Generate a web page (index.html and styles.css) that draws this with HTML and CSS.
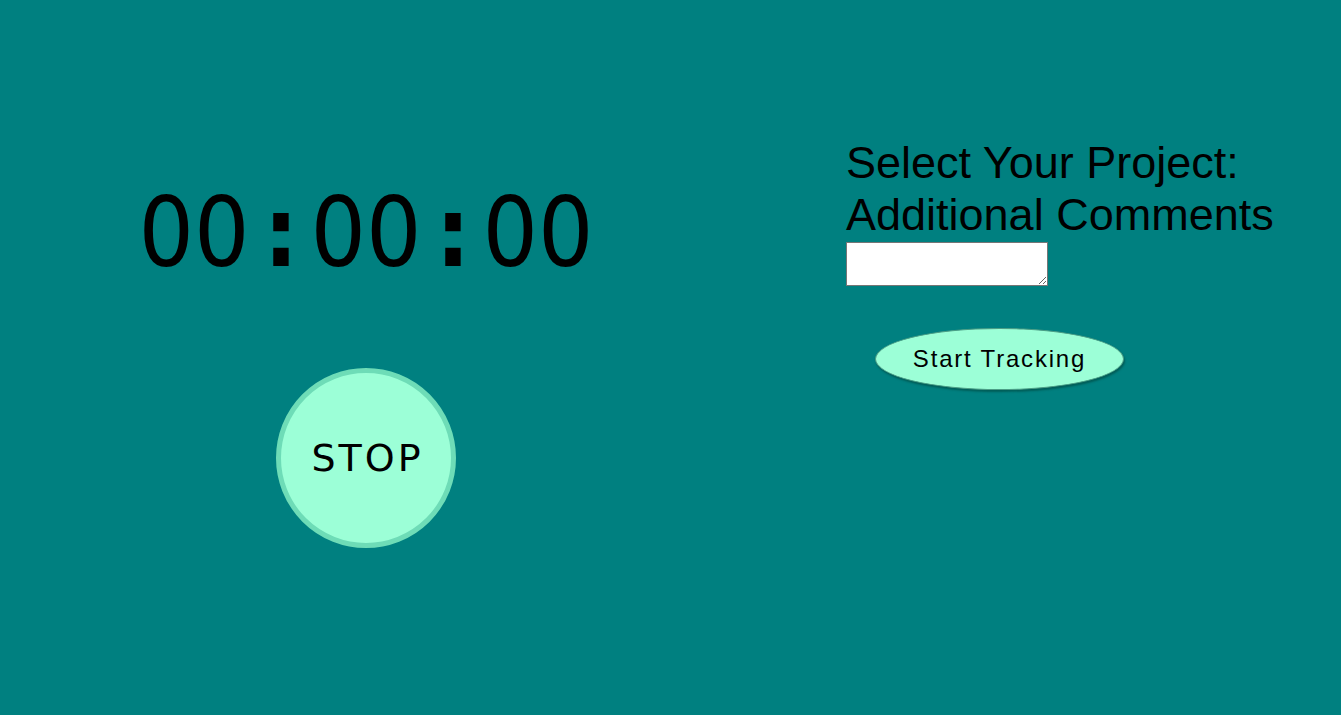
FILE: index.html
```html
<!DOCTYPE html>
<html>
<head>
<meta charset="utf-8">
<link rel="stylesheet" href="styles.css">
</head>
<body>
<div class="page">
  <div class="left">
    <div class="timer">00<span class="colon">:</span>00<span class="colon">:</span>00</div>
    <button class="stop">STOP</button>
  </div>
  <div class="right">
    <div class="label">Select Your Project:</div>
    <div class="label">Additional Comments</div>
    <textarea class="comments"></textarea>
    <button class="start">Start Tracking</button>
  </div>
</div>
</body>
</html>
```
FILE: styles.css
```css
html, body {
  margin: 0;
  padding: 0;
  background: #008080;
  height: 100%;
}
.page {
  display: flex;
  height: 715px;
}
.left {
  width: 732px;
  display: flex;
  flex-direction: column;
  align-items: center;
  padding-top: 176px;
}
.timer {
  font-family: "DejaVu Sans Condensed", "DejaVu Sans", sans-serif;
  font-stretch: condensed;
  font-size: 97px;
  line-height: 114px;
  color: #000;
  letter-spacing: 0;
}
.colon {
  font-weight: bold;
  padding: 0 12px 0 14px;
}
.stop {
  margin-top: 78px;
  width: 180px;
  height: 180px;
  border-radius: 50%;
  border: 5px solid #6edcb7;
  background: #9cffd7;
  font-family: "DejaVu Sans", sans-serif;
  font-size: 38px;
  letter-spacing: 3px;
  color: #000;
  padding: 0 0 0 3px;
}
.right {
  margin-left: 114px;
  padding-top: 137px;
  display: flex;
  flex-direction: column;
  align-items: flex-start;
}
.label {
  font-family: "Liberation Sans", Arial, sans-serif;
  font-size: 45px;
  line-height: 52px;
  color: #000;
}
.comments {
  margin-top: 1px;
  width: 200px;
  height: 42px;
  padding: 0;
  border: 1px solid #767676;
  background: #fff;
  box-sizing: content-box;
}
.start {
  margin-top: 42px;
  margin-left: 29px;
  width: 249px;
  height: 62px;
  border-radius: 50%;
  border: 1px solid #4c9e86;
  background: #9cffd7;
  box-shadow: 1px 2px 2px rgba(0, 60, 50, 0.5);
  font-family: "Liberation Sans", Arial, sans-serif;
  font-size: 24px;
  letter-spacing: 1.8px;
  color: #000;
  padding: 0;
}
```
